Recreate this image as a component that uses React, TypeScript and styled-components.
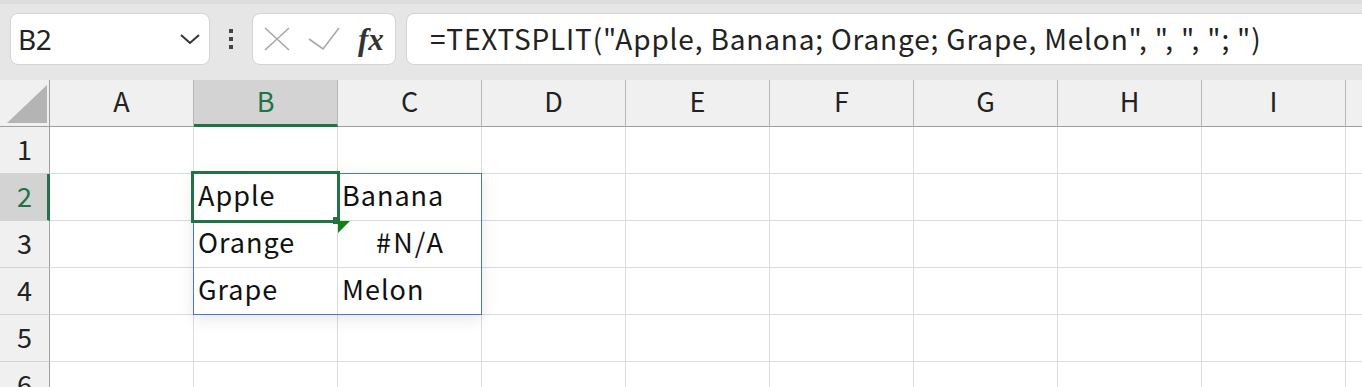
import React from 'react';
import styled, { createGlobalStyle } from 'styled-components';

const GlobalStyle = createGlobalStyle`
  html, body {
    margin: 0;
    padding: 0;
    background: #ffffff;
    overflow: hidden;
  }
`;

const COLS = ['A', 'B', 'C', 'D', 'E', 'F', 'G', 'H', 'I', ''];
const ROWS = [1, 2, 3, 4, 5, 6];

// cell values keyed by "col+row"
const values: Record<string, { text: string; center?: boolean }> = {
  B2: { text: 'Apple' },
  C2: { text: 'Banana' },
  B3: { text: 'Orange' },
  C3: { text: '#N/A', center: true },
  B4: { text: 'Grape' },
  C4: { text: 'Melon' },
};

const Page = styled.div`
  width: 1362px;
  height: 387px;
  overflow: hidden;
  font-family: "Noto Sans CJK JP", "Noto Sans", sans-serif;
`;

const Toolbar = styled.div`
  height: 80px;
  box-sizing: border-box;
  background: linear-gradient(#dddddd 0, #dddddd 4px, #e6e6e6 4px);
  display: flex;
  align-items: flex-start;
  padding: 13px 0 0 10px;
`;

const Box = styled.div<{ $w?: number; $open?: boolean }>`
  height: 52px;
  box-sizing: border-box;
  background: #fff;
  border: 1px solid #d4d4d4;
  border-radius: ${(p) => (p.$open ? '8px 0 0 8px' : '8px')};
  ${(p) => (p.$open ? 'border-right: none;' : '')}
  display: flex;
  align-items: center;
  flex: ${(p) => (p.$w ? `0 0 ${p.$w}px` : '1 1 auto')};
`;

const NameBox = styled(Box)`
  justify-content: space-between;
  padding: 0 8px 0 7px;
`;

const NameText = styled.span`
  font-family: "Noto Sans", sans-serif;
  font-size: 28px;
  color: #222;
  letter-spacing: -0.5px;
`;

const Grip = styled.div`
  flex: 0 0 42px;
  height: 52px;
  display: flex;
  align-items: center;
  justify-content: center;
`;

const Actions = styled(Box)`
  padding: 0 10px 0 11px;
  gap: 18px;
  margin-right: 10px;
`;

const Fx = styled.span`
  font-family: "Liberation Serif", serif;
  font-style: italic;
  font-weight: bold;
  font-size: 31px;
  color: #333;
  line-height: 1;
`;

const FormulaBox = styled(Box)`
  margin-right: -4px;
  padding-left: 23px;
`;

const FormulaText = styled.span`
  font-size: 28px;
  color: #222;
  white-space: pre;
  letter-spacing: 0.83px;
  padding-bottom: 2px;
`;

const SheetWrap = styled.div`
  position: relative;
`;

const Grid = styled.div`
  display: grid;
  grid-template-columns: 50px repeat(9, 144px) 40px;
  grid-auto-rows: 47px;
`;

const Corner = styled.div`
  background: #f0f0f0;
  border-right: 1px solid #9e9e9e;
  border-bottom: 1px solid #9e9e9e;
  display: flex;
  align-items: flex-end;
  justify-content: flex-end;
  padding: 0 2px 3px 0;
`;

const ColHead = styled.div<{ $sel?: boolean }>`
  background: ${(p) => (p.$sel ? '#d3d3d3' : '#f0f0f0')};
  border-right: 1px solid #b6b6b6;
  border-bottom: ${(p) => (p.$sel ? '3px solid #217346' : '1px solid #9e9e9e')};
  color: ${(p) => (p.$sel ? '#217346' : '#222')};
  display: flex;
  align-items: center;
  justify-content: center;
  font-size: 27px;
  padding-bottom: ${(p) => (p.$sel ? '4px' : '6px')};
`;

const RowHead = styled.div<{ $sel?: boolean }>`
  background: ${(p) => (p.$sel ? '#d3d3d3' : '#f0f0f0')};
  border-right: ${(p) => (p.$sel ? '3px solid #217346' : '1px solid #9e9e9e')};
  border-bottom: 1px solid #d4d4d4;
  color: ${(p) => (p.$sel ? '#217346' : '#222')};
  display: flex;
  align-items: center;
  justify-content: center;
  font-size: 27px;
  padding-left: ${(p) => (p.$sel ? '2px' : '0')};
  padding-bottom: 4px;
`;

const Cell = styled.div<{ $center?: boolean }>`
  border-right: 1px solid #dcdcdc;
  border-bottom: 1px solid #dcdcdc;
  display: flex;
  align-items: center;
  justify-content: ${(p) => (p.$center ? 'center' : 'flex-start')};
  padding-left: ${(p) => (p.$center ? '2px' : '4px')};
  padding-bottom: 5px;
  font-size: 27px;
  color: #111;
  letter-spacing: ${(p) => (p.$center ? '2.2px' : '1px')};
`;

const SpillBorder = styled.div`
  position: absolute;
  left: 193px;
  top: 93px;
  width: 289px;
  height: 142px;
  box-sizing: border-box;
  border: 1px solid #4a78c8;
  box-shadow: 0 4px 14px rgba(0, 0, 0, 0.1);
  pointer-events: none;
`;

const Selection = styled.div`
  position: absolute;
  left: 191px;
  top: 91px;
  width: 149px;
  height: 52px;
  box-sizing: border-box;
  border: 3px solid #217346;
  pointer-events: none;
`;

const Handle = styled.div`
  position: absolute;
  left: 333px;
  top: 137px;
  width: 7px;
  height: 7px;
  background: #217346;
`;

const ErrorMark = styled.div`
  position: absolute;
  left: 338px;
  top: 141px;
  width: 0;
  height: 0;
  border-top: 12px solid #128012;
  border-right: 12px solid transparent;
`;

export default function App() {
  return (
    <Page>
      <GlobalStyle />
      <Toolbar>
        <NameBox $w={200}>
          <NameText>B2</NameText>
          <svg width="22" height="12" viewBox="0 0 22 12">
            <path d="M2 2 L11 10 L20 2" fill="none" stroke="#333" strokeWidth="2" />
          </svg>
        </NameBox>
        <Grip>
          <svg width="6" height="22" viewBox="0 0 6 22">
            <rect x="1" y="1" width="4" height="4" fill="#444" />
            <rect x="1" y="9" width="4" height="4" fill="#444" />
            <rect x="1" y="17" width="4" height="4" fill="#444" />
          </svg>
        </Grip>
        <Actions $w={144}>
          <svg width="26" height="24" viewBox="0 0 26 24">
            <path d="M1 1 L25 23 M25 1 L1 23" stroke="#a8a8a8" strokeWidth="1.6" fill="none" />
          </svg>
          <svg width="32" height="24" viewBox="0 0 32 24">
            <path d="M1 12 L15 22 L31 1" stroke="#a8a8a8" strokeWidth="1.6" fill="none" />
          </svg>
          <Fx>fx</Fx>
        </Actions>
        <FormulaBox $open>
          <FormulaText>=TEXTSPLIT("Apple, Banana; Orange; Grape, Melon", ", ", "; ")</FormulaText>
        </FormulaBox>
      </Toolbar>
      <SheetWrap>
        <Grid>
          <Corner>
            <svg width="40" height="38" viewBox="0 0 40 38">
              <polygon points="0,38 40,38 40,0" fill="#b4b4b4" />
            </svg>
          </Corner>
          {COLS.map((c) => (
            <ColHead key={c || 'x'} $sel={c === 'B'}>{c}</ColHead>
          ))}
          {ROWS.map((r) => (
            <React.Fragment key={r}>
              <RowHead $sel={r === 2}>{r}</RowHead>
              {COLS.map((c) => {
                const v = values[`${c}${r}`];
                return (
                  <Cell key={c || 'x'} $center={v?.center}>
                    {v?.text}
                  </Cell>
                );
              })}
            </React.Fragment>
          ))}
        </Grid>
        <SpillBorder />
        <Selection />
        <Handle />
        <ErrorMark />
      </SheetWrap>
    </Page>
  );
}
